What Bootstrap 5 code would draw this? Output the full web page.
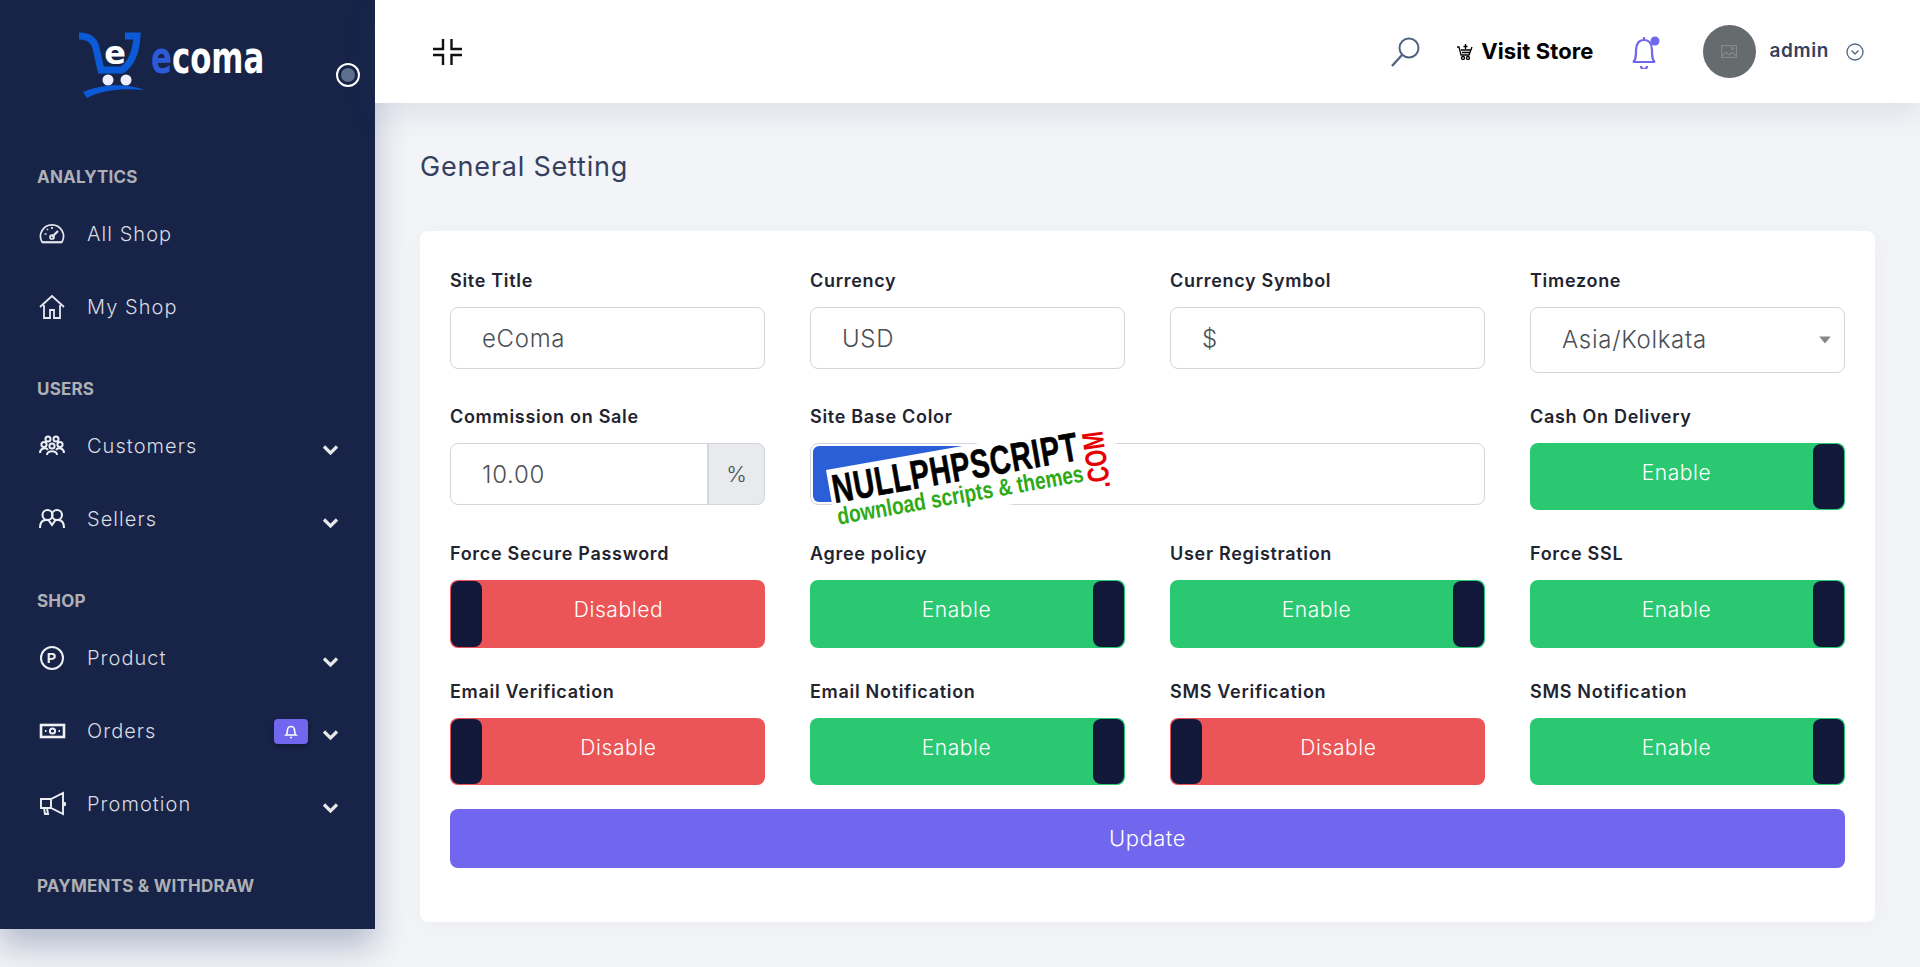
<!DOCTYPE html>
<html lang="en">
<head>
<meta charset="utf-8">
<title>General Setting</title>
<link href="https://cdn.jsdelivr.net/npm/bootstrap@5.3.0/dist/css/bootstrap.min.css" rel="stylesheet">
<style>
:root{--fam:"Inter","Noto Sans","Liberation Sans",sans-serif;}
html,body{height:967px;overflow:hidden;}
body{background:#f3f4f7;font-family:var(--fam);color:#1f2430;}
.shell{align-items:flex-start;}
.side{width:375px;height:929px;flex:none;background:#172448;box-shadow:0 18px 30px rgba(40,60,110,.3);overflow:hidden;}
.brand{height:156px;padding-left:78px;}
.brand svg{margin-top:30px;flex:none;}
.brandname{font:700 44px/1 "DejaVu Sans",sans-serif;color:#fff;margin:36px 0 0 5px;transform:scaleX(.7);transform-origin:left top;}
.brandname b{color:#2b5bd7;font-weight:700;}
.sidedot{width:24px;height:24px;border:2px solid #fff;border-radius:50%;margin:63px 15px 0 auto;padding:3px;flex:none;}
.sidedot i{display:block;width:14px;height:14px;border-radius:50%;background:#5f6f8e;}
.sechead{height:43px;line-height:43px;margin:0 0 0 37px;font-size:17px;font-weight:700;color:#aeb0b5;letter-spacing:.2px;}
.sechead.gap{margin-top:23px;}
.sideitem{height:73px;padding:0 36px 3px 37px;color:#d9dbe0;font-size:20px;font-weight:300;letter-spacing:1.05px;text-decoration:none;}
.sideitem:hover{color:#fff;}
.sideitem>svg:first-child{width:30px;height:30px;margin-right:20px;flex:none;}
.chev{width:17px;height:12px;margin-left:auto;margin-top:8px;}
.ordbadge{width:34px;height:25px;background:#7166ee;border-radius:4px;margin-left:auto;box-shadow:0 2px 5px rgba(0,0,0,.3);}
.ordbadge+.chev{margin-left:14px;}
.mainpane{min-width:0;}
.topbar{height:103px;background:#fff;box-shadow:0 10px 30px rgba(60,80,130,.12);padding:0 56px 0 58px;}
.srch{margin-left:auto;}
.store{font-size:22px;font-weight:700;color:#000;margin-left:36px;text-decoration:none;letter-spacing:.1px;}
.store svg{margin-right:8px;}
.bellb{margin-left:36px;}
.avat{width:53px;height:53px;border-radius:50%;background:#666b6e;margin-left:43px;}
.admname{font-size:19px;font-weight:600;color:#34405f;margin-left:14px;letter-spacing:.6px;}
.admchev{margin-left:17px;}
.pagehead{font-size:27px;font-weight:400;color:#34405f;margin:48px 0 48px 45px;line-height:32px;letter-spacing:.8px;}
.setcard{margin:0 45px;background:#fff;border-radius:8px;padding:35px 30px 54px;box-shadow:0 4px 24px rgba(60,80,130,.04);border:0;}
.setrow{--bs-gutter-x:45px;--bs-gutter-y:0;}
.setfield{margin-bottom:29px;}
.setlabel{display:block;height:28px;line-height:30px;margin-bottom:13px;font-size:18px;font-weight:600;color:#1f2430;letter-spacing:.7px;white-space:nowrap;}
.setinput{height:62px;padding:0 10px 0 31px;font-size:24px;font-weight:300;color:#4c4f55;border-color:#d3d6de;border-radius:8px;letter-spacing:.7px;}
select.setinput{height:66px;background-position:right 12px center;background-size:14px 14px;background-image:url("data:image/svg+xml,%3csvg xmlns='http://www.w3.org/2000/svg' viewBox='0 0 12 12'%3e%3cpath fill='%23888' d='M1 3h10L6 9z'/%3e%3c/svg%3e");}
.pct{font-size:22px;font-weight:300;color:#4c4f55;background:#e8eaee;border-color:#d3d6de;border-left-width:2px;width:58px;justify-content:center;padding:0;border-radius:0 8px 8px 0;}
.colorbox{height:62px;border:1px solid #d3d6de;border-radius:8px;background:#fff;overflow:hidden;padding:2px;}
.colorbox span{display:block;height:100%;width:155px;background:#2a5fd8;border-radius:6px 0 0 6px;}
.tog{height:67px;border-radius:8px;color:#fff;font-size:21px;font-weight:300;padding:1px;letter-spacing:.6px;}
.tog.tall{height:68px;}
.tog.on{background:#2ac870;}
.tog.off{background:#ec5557;flex-direction:row-reverse;}
.tog .lbl{flex:1;text-align:center;padding-bottom:8px;}
.tog.on .lbl{padding-left:9px;}
.tog.off .lbl{padding-right:9px;}
.tog .knob{width:31px;align-self:stretch;background:#11183a;border-radius:8px;}
.updbtn{height:59px;background:#7166ee;border:0;color:#fff;font-size:22px;font-weight:300;border-radius:8px;margin-top:-5px;letter-spacing:.5px;}
.updbtn:hover{background:#6458e0;color:#fff;}
.wmark{position:absolute;left:826px;top:470px;width:290px;height:66px;background:#fff;transform:rotate(-10deg);transform-origin:left top;line-height:1;white-space:nowrap;}
.wm1{position:absolute;left:3px;top:0;font:700 40px/1 "Liberation Sans",sans-serif;color:#000;transform:scaleX(.715);transform-origin:left top;letter-spacing:1px;-webkit-text-stroke:.6px #000;}
.wm2{position:absolute;left:3px;top:36px;font:700 24px/1 "Liberation Sans",sans-serif;color:#2eaa18;transform:scaleX(.8);transform-origin:left top;}
.wm3{position:absolute;left:277px;top:41px;font:700 30px/1 "Liberation Sans",sans-serif;color:#e60000;transform:rotate(-88deg) scaleX(.73);transform-origin:0 25px;}
</style>
</head>
<body>
<div class="shell d-flex">
<aside class="side">
  <div class="brand d-flex">
    <svg width="68" height="70" viewBox="0 0 68 70">
      <path d="M1 6C10 6 16 9 18 18L23 40H44C53 34 58 22 59 6H47" fill="none" stroke="#0b5bd8" stroke-width="7"/>
      <circle cx="30" cy="50" r="5.5" fill="#eef"/><circle cx="48" cy="50" r="5.5" fill="#eef"/>
      <path d="M5 62C24 54 48 53 66 60C44 58 24 60 9 68Z" fill="#0b5bd8"/>
      <text x="37" y="34" text-anchor="middle" font-family="DejaVu Sans" font-weight="700" font-size="32" fill="#fff">e</text>
    </svg>
    <div class="brandname"><b>e</b>coma</div>
    <div class="sidedot"><i></i></div>
  </div>
  <div class="sechead">ANALYTICS</div>
  <a class="sideitem d-flex align-items-center" href="#">
    <svg viewBox="0 0 30 30" fill="none" stroke="#e6e8ee" stroke-width="1.7"><path d="M5 23a11.500 11.500 0 1 1 20 0z"/><path d="M5 23.500h20"/><path d="M15 18l6-6" stroke-width="2.200"/><circle cx="15" cy="18" r="2"/><path d="M7.500 15h2M15 8v2M10 10l1 1"/></svg>All Shop</a>
  <a class="sideitem d-flex align-items-center" href="#">
    <svg viewBox="0 0 30 30" fill="none" stroke="#e6e8ee" stroke-width="1.8"><path d="M3 15L15 4l12 11M7 13v13h6v-8h4v8h6V13"/></svg>My Shop</a>
  <div class="sechead gap">USERS</div>
  <a class="sideitem d-flex align-items-center" href="#">
    <svg viewBox="0 0 30 30" fill="none" stroke="#eef0f4" stroke-width="2"><circle cx="11" cy="8" r="2.500"/><circle cx="19" cy="8" r="2.500"/><circle cx="7" cy="13.500" r="2.600"/><circle cx="15" cy="15" r="2.600"/><circle cx="23" cy="13.500" r="2.600"/><path d="M3 22c0-5 6-6 8-3M10 24c0-5 10-5 10 0M19 19c2-3 8-2 8 3"/></svg>Customers
    <svg class="chev" viewBox="0 0 17 12" fill="none" stroke="#e8e8e8" stroke-width="3.2"><path d="M2 2.5l6.5 6.5L15 2.5"/></svg></a>
  <a class="sideitem d-flex align-items-center" href="#">
    <svg viewBox="0 0 30 30" fill="none" stroke="#eef0f4" stroke-width="2.100"><circle cx="10.500" cy="11" r="5"/><circle cx="20" cy="11" r="5"/><path d="M3 24c0-5 2-8 6-8h2.500l3.500 5 3.500-5H21c4 0 6 3 6 8"/></svg>Sellers
    <svg class="chev" viewBox="0 0 17 12" fill="none" stroke="#e8e8e8" stroke-width="3.2"><path d="M2 2.5l6.5 6.5L15 2.5"/></svg></a>
  <div class="sechead gap">SHOP</div>
  <a class="sideitem d-flex align-items-center" href="#">
    <svg viewBox="0 0 30 30" fill="none" stroke="#eef0f4" stroke-width="2"><circle cx="15" cy="15" r="11"/><text x="15" y="20" text-anchor="middle" font-family="Liberation Sans" font-weight="700" font-size="14" fill="#eef0f4" stroke="none">P</text></svg>Product
    <svg class="chev" viewBox="0 0 17 12" fill="none" stroke="#e8e8e8" stroke-width="3.2"><path d="M2 2.5l6.5 6.5L15 2.5"/></svg></a>
  <a class="sideitem d-flex align-items-center" href="#">
    <svg viewBox="0 0 30 30" fill="none" stroke="#eef0f4" stroke-width="2.600"><rect x="4" y="9" width="23" height="12"/><circle cx="15.500" cy="15" r="2.600" stroke-width="2"/><path d="M8 15h1.500M21.500 15H23" stroke-width="2"/></svg>Orders
    <span class="ordbadge d-flex align-items-center justify-content-center"><svg width="14" height="15" viewBox="0 0 14 15" fill="none" stroke="#fff" stroke-width="1.6"><path d="M2 11c1-1 1.500-2 1.500-5a3.500 3.500 0 0 1 7 0c0 3 .5 4 1.500 5zM6 13.500h2"/></svg></span>
    <svg class="chev" viewBox="0 0 17 12" fill="none" stroke="#e8e8e8" stroke-width="3.2"><path d="M2 2.5l6.5 6.500L15 2.500"/></svg></a>
  <a class="sideitem d-flex align-items-center" href="#">
    <svg viewBox="0 0 30 30" fill="none" stroke="#eef0f4" stroke-width="1.900"><path d="M4 10h10l12-6v21l-12-6H4zM14 10v9M7 19l1 6h3l-1-6M26 13l2 1v2l-2 1"/></svg>Promotion
    <svg class="chev" viewBox="0 0 17 12" fill="none" stroke="#e8e8e8" stroke-width="3.2"><path d="M2 2.5l6.5 6.500L15 2.500"/></svg></a>
  <div class="sechead gap">PAYMENTS &amp; WITHDRAW</div>
</aside>
<div class="mainpane flex-grow-1">
  <header class="topbar d-flex align-items-center">
    <svg width="30" height="30" viewBox="0 0 30 30" fill="none" stroke="#111" stroke-width="2.400"><path d="M10 2v10H0M18.500 2v10H29M10 28V18H0M18.500 28V18H29"/></svg>
    <svg class="srch" width="30" height="32" viewBox="0 0 30 32" fill="none" stroke="#4f6480" stroke-width="2"><circle cx="18" cy="12" r="9.500"/><path d="M11 19L1 30" stroke-width="2.400"/></svg>
    <a class="store d-flex align-items-center" href="#"><svg width="16" height="16" viewBox="0 0 16 16" fill="none" stroke="#000" stroke-width="1.300"><path d="M0 3h2l2 8h8l3-8M4 6h10M5 8.500h8M8.500 0v5M6.500 2.500h4"/><circle cx="6" cy="14" r="1.500"/><circle cx="11" cy="14" r="1.500"/></svg>Visit Store</a>
    <svg class="bellb" width="30" height="34" viewBox="0 0 30 34" fill="none" stroke="#7166ee" stroke-width="2.200"><path d="M3 27c2-1 3-3 3-12 0-6 3-10 8-10s8 4 8 10c0 9 1 11 3 12zM11 31a3 3 0 0 0 6 0M14 2v3"/><circle cx="25" cy="6" r="4.500" fill="#7166ee" stroke="none"/></svg>
    <div class="avat d-flex align-items-center justify-content-center"><svg width="16" height="13" viewBox="0 0 16 13" fill="none" stroke="#85898c" stroke-width="1.200"><rect x=".6" y=".6" width="14.800" height="11.800"/><path d="M1 11l4-4 3 3 3-3 4 4"/><circle cx="11.500" cy="3.500" r="1"/></svg></div>
    <span class="admname">admin</span>
    <svg class="admchev" width="18" height="18" viewBox="0 0 18 18" fill="none" stroke="#4f6480" stroke-width="1.300"><circle cx="9" cy="9" r="8"/><path d="M5.500 7.500L9 11l3.500-3.500"/></svg>
  </header>
  <h1 class="pagehead">General Setting</h1>
  <form class="card setcard">
    <div class="row setrow">
      <div class="col-3 setfield"><label class="setlabel">Site Title</label><input class="form-control setinput" value="eComa"></div>
      <div class="col-3 setfield"><label class="setlabel">Currency</label><input class="form-control setinput" value="USD"></div>
      <div class="col-3 setfield"><label class="setlabel">Currency Symbol</label><input class="form-control setinput" value="$"></div>
      <div class="col-3 setfield"><label class="setlabel">Timezone</label><select class="form-select setinput"><option>Asia/Kolkata</option></select></div>

      <div class="col-3 setfield"><label class="setlabel">Commission on Sale</label><div class="input-group"><input class="form-control setinput" value="10.00"><span class="input-group-text pct">%</span></div></div>
      <div class="col-6 setfield"><label class="setlabel">Site Base Color</label><div class="colorbox"><span></span></div></div>
      <div class="col-3 setfield"><label class="setlabel">Cash On Delivery</label><div class="tog on d-flex align-items-center"><span class="lbl">Enable</span><span class="knob"></span></div></div>

      <div class="col-3 setfield"><label class="setlabel">Force Secure Password</label><div class="tog tall off d-flex align-items-center"><span class="lbl">Disabled</span><span class="knob"></span></div></div>
      <div class="col-3 setfield"><label class="setlabel">Agree policy</label><div class="tog tall on d-flex align-items-center"><span class="lbl">Enable</span><span class="knob"></span></div></div>
      <div class="col-3 setfield"><label class="setlabel">User Registration</label><div class="tog tall on d-flex align-items-center"><span class="lbl">Enable</span><span class="knob"></span></div></div>
      <div class="col-3 setfield"><label class="setlabel">Force SSL</label><div class="tog tall on d-flex align-items-center"><span class="lbl">Enable</span><span class="knob"></span></div></div>

      <div class="col-3 setfield"><label class="setlabel">Email Verification</label><div class="tog off d-flex align-items-center"><span class="lbl">Disable</span><span class="knob"></span></div></div>
      <div class="col-3 setfield"><label class="setlabel">Email Notification</label><div class="tog on d-flex align-items-center"><span class="lbl">Enable</span><span class="knob"></span></div></div>
      <div class="col-3 setfield"><label class="setlabel">SMS Verification</label><div class="tog off d-flex align-items-center"><span class="lbl">Disable</span><span class="knob"></span></div></div>
      <div class="col-3 setfield"><label class="setlabel">SMS Notification</label><div class="tog on d-flex align-items-center"><span class="lbl">Enable</span><span class="knob"></span></div></div>
    </div>
    <button type="button" class="btn updbtn w-100">Update</button>
  </form>
</div>
</div>
<div class="wmark"><span class="wm1">NULLPHPSCRIPT</span><span class="wm2">download scripts &amp; themes</span><span class="wm3">.COM</span></div>
<script src="https://cdn.jsdelivr.net/npm/bootstrap@5.3.0/dist/js/bootstrap.bundle.min.js"></script>
</body>
</html>
